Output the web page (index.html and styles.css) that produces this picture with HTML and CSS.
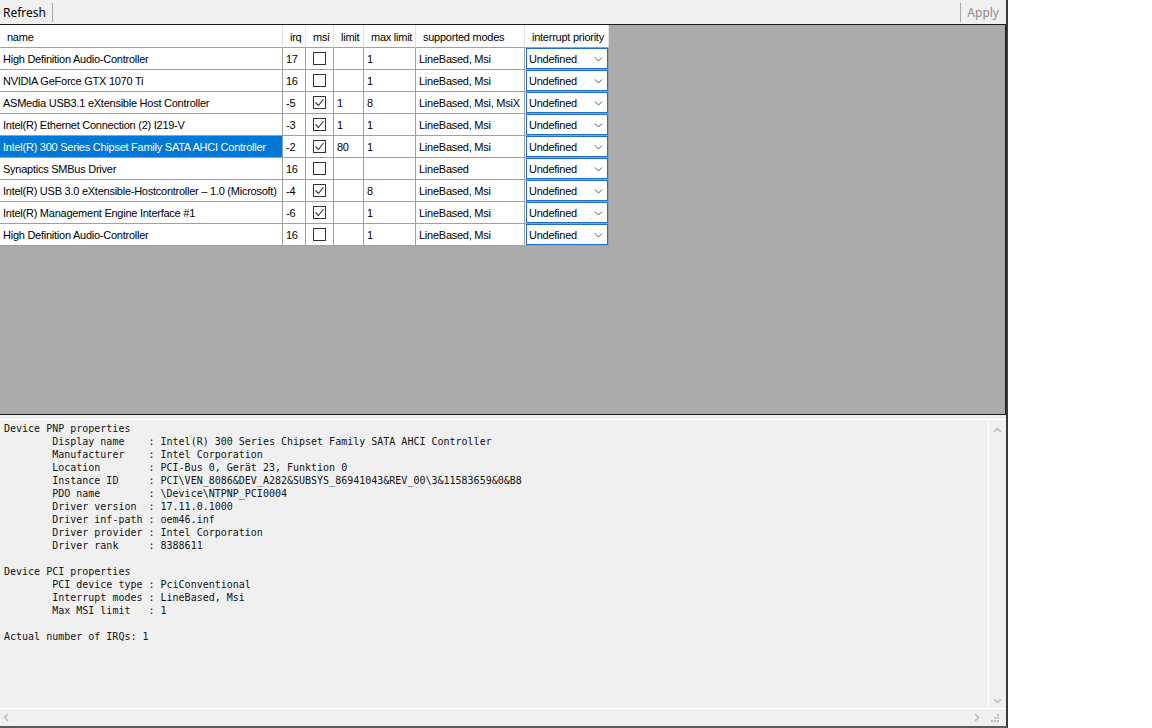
FILE: index.html
```html
<!DOCTYPE html>
<html lang="en">
<head>
<meta charset="utf-8">
<title>MSI mode utility</title>
<link rel="stylesheet" href="styles.css">
</head>
<body>
<div class="window">
  <div class="toolbar">
    <button class="tb-btn">Refresh</button>
    <span class="tb-sep"></span>
    <span class="tb-spacer"></span>
    <span class="tb-sep"></span>
    <button class="tb-btn disabled">Apply</button>
  </div>

  <div class="grid-panel">
    <div class="devgrid">
      <div class="hd">name</div><div class="hd">irq</div><div class="hd">msi</div><div class="hd">limit</div><div class="hd">max limit</div><div class="hd">supported modes</div><div class="hd">interrupt priority</div>

      <div class="cell">High Definition Audio-Controller</div><div class="cell">17</div><div class="cell chk"><span class="box"></span></div><div class="cell"></div><div class="cell">1</div><div class="cell">LineBased, Msi</div><div class="cell pri"><span class="combo">Undefined<svg viewBox="0 0 8 5"><polyline points="0.5,0.5 4,4 7.5,0.5"/></svg></span></div>

      <div class="cell">NVIDIA GeForce GTX 1070 Ti</div><div class="cell">16</div><div class="cell chk"><span class="box"></span></div><div class="cell"></div><div class="cell">1</div><div class="cell">LineBased, Msi</div><div class="cell pri"><span class="combo">Undefined<svg viewBox="0 0 8 5"><polyline points="0.5,0.5 4,4 7.5,0.5"/></svg></span></div>

      <div class="cell">ASMedia USB3.1 eXtensible Host Controller</div><div class="cell">-5</div><div class="cell chk"><span class="box"><svg viewBox="0 0 11 11"><polyline points="1.5,5.5 4.5,8.5 9.5,2"/></svg></span></div><div class="cell">1</div><div class="cell">8</div><div class="cell">LineBased, Msi, MsiX</div><div class="cell pri"><span class="combo">Undefined<svg viewBox="0 0 8 5"><polyline points="0.5,0.5 4,4 7.5,0.5"/></svg></span></div>

      <div class="cell">Intel(R) Ethernet Connection (2) I219-V</div><div class="cell">-3</div><div class="cell chk"><span class="box"><svg viewBox="0 0 11 11"><polyline points="1.5,5.5 4.5,8.5 9.5,2"/></svg></span></div><div class="cell">1</div><div class="cell">1</div><div class="cell">LineBased, Msi</div><div class="cell pri"><span class="combo">Undefined<svg viewBox="0 0 8 5"><polyline points="0.5,0.5 4,4 7.5,0.5"/></svg></span></div>

      <div class="cell selected">Intel(R) 300 Series Chipset Family SATA AHCI Controller</div><div class="cell">-2</div><div class="cell chk"><span class="box"><svg viewBox="0 0 11 11"><polyline points="1.5,5.5 4.5,8.5 9.5,2"/></svg></span></div><div class="cell">80</div><div class="cell">1</div><div class="cell">LineBased, Msi</div><div class="cell pri"><span class="combo">Undefined<svg viewBox="0 0 8 5"><polyline points="0.5,0.5 4,4 7.5,0.5"/></svg></span></div>

      <div class="cell">Synaptics SMBus Driver</div><div class="cell">16</div><div class="cell chk"><span class="box"></span></div><div class="cell"></div><div class="cell"></div><div class="cell">LineBased</div><div class="cell pri"><span class="combo">Undefined<svg viewBox="0 0 8 5"><polyline points="0.5,0.5 4,4 7.5,0.5"/></svg></span></div>

      <div class="cell">Intel(R) USB 3.0 eXtensible-Hostcontroller – 1.0 (Microsoft)</div><div class="cell">-4</div><div class="cell chk"><span class="box"><svg viewBox="0 0 11 11"><polyline points="1.5,5.5 4.5,8.5 9.5,2"/></svg></span></div><div class="cell"></div><div class="cell">8</div><div class="cell">LineBased, Msi</div><div class="cell pri"><span class="combo">Undefined<svg viewBox="0 0 8 5"><polyline points="0.5,0.5 4,4 7.5,0.5"/></svg></span></div>

      <div class="cell">Intel(R) Management Engine Interface #1</div><div class="cell">-6</div><div class="cell chk"><span class="box"><svg viewBox="0 0 11 11"><polyline points="1.5,5.5 4.5,8.5 9.5,2"/></svg></span></div><div class="cell"></div><div class="cell">1</div><div class="cell">LineBased, Msi</div><div class="cell pri"><span class="combo">Undefined<svg viewBox="0 0 8 5"><polyline points="0.5,0.5 4,4 7.5,0.5"/></svg></span></div>

      <div class="cell">High Definition Audio-Controller</div><div class="cell">16</div><div class="cell chk"><span class="box"></span></div><div class="cell"></div><div class="cell">1</div><div class="cell">LineBased, Msi</div><div class="cell pri"><span class="combo">Undefined<svg viewBox="0 0 8 5"><polyline points="0.5,0.5 4,4 7.5,0.5"/></svg></span></div>
    </div>
  </div>

  <div class="splitter"></div>

  <div class="details">
    <div class="details-main">
<pre class="details-text">Device PNP properties
	Display name    : Intel(R) 300 Series Chipset Family SATA AHCI Controller
	Manufacturer    : Intel Corporation
	Location        : PCI-Bus 0, Gerät 23, Funktion 0
	Instance ID     : PCI\VEN_8086&amp;DEV_A282&amp;SUBSYS_86941043&amp;REV_00\3&amp;11583659&amp;0&amp;B8
	PDO name        : \Device\NTPNP_PCI0004
	Driver version  : 17.11.0.1000
	Driver inf-path : oem46.inf
	Driver provider : Intel Corporation
	Driver rank     : 8388611

Device PCI properties
	PCI device type : PciConventional
	Interrupt modes : LineBased, Msi
	Max MSI limit   : 1

Actual number of IRQs: 1</pre>
      <div class="vscroll">
        <svg class="arrow" viewBox="0 0 9 6"><polyline points="1,5 4.5,1.5 8,5"/></svg>
        <svg class="arrow" viewBox="0 0 9 6"><polyline points="1,1 4.5,4.5 8,1"/></svg>
      </div>
    </div>
    <div class="hscroll">
      <svg class="arrow h" viewBox="0 0 6 9"><polyline points="5,1 1.5,4.5 5,8"/></svg>
      <svg class="arrow h" viewBox="0 0 6 9"><polyline points="1,1 4.5,4.5 1,8"/></svg>
      <span class="grip">
        <i></i><i></i><i></i><i></i><i></i><i></i>
      </span>
    </div>
  </div>
</div>
</body>
</html>
```

FILE: styles.css
```css
html, body {
  margin: 0;
  padding: 0;
  background: #ffffff;
}

.window {
  width: 1006px;
  height: 726px;
  background: #f0f0f0;
  border-right: 2px solid #3a3a3a;
  border-bottom: 2px solid #5a5a5a;
  display: flex;
  flex-direction: column;
  font-family: "Liberation Sans", Arial, sans-serif;
  font-size: 11px;
  color: #000;
  overflow: hidden;
}

/* ---- toolbar ---- */
.toolbar {
  height: 24px;
  flex: none;
  display: flex;
  align-items: center;
}

.tb-btn {
  font-family: "Noto Sans", "Liberation Sans", sans-serif;
  font-size: 12px;
  background: transparent;
  border: 0;
  padding: 0 4px 0 3px;
  margin: 0;
  height: 22px;
  color: #000;
}

.tb-btn.disabled {
  color: #8d8d8d;
  padding: 0 7px 0 6px;
}

.tb-sep {
  width: 1px;
  height: 19px;
  background: #a8a8a8;
  margin-left: 2px;
}

.tb-spacer {
  flex: 1;
}

/* ---- device grid ---- */
.grid-panel {
  height: 389px;
  flex: none;
  background: #ababab;
  border-top: 1px solid #1a1a1a;
  border-right: 1px solid #1a1a1a;
  border-bottom: 1px solid #1a1a1a;
}

.devgrid {
  display: grid;
  grid-template-columns: 283px 23px 28px 30px 52px 109px 84px;
  grid-template-rows: 23px;
  grid-auto-rows: 22px;
  width: 609px;
  letter-spacing: -0.25px;
}

.hd {
  background: #fff;
  border-right: 1px solid #e3e3e3;
  border-bottom: 1px solid #a0a0a0;
  padding: 2px 0 0 7px;
  line-height: 20px;
  white-space: nowrap;
  overflow: hidden;
  color: #000;
}

.cell {
  background: #fff;
  border-right: 1px solid #a0a0a0;
  border-bottom: 1px solid #a0a0a0;
  padding: 1px 0 0 3px;
  line-height: 20px;
  white-space: nowrap;
  overflow: hidden;
}

.cell.selected {
  background: #0078d7;
  color: #fff;
}

.cell.chk {
  display: flex;
  align-items: center;
  justify-content: center;
  padding: 0;
}

.box {
  width: 11px;
  height: 11px;
  border: 1px solid #333;
  background: #fff;
  display: flex;
}

.box svg {
  width: 11px;
  height: 11px;
  fill: none;
  stroke: #333;
  stroke-width: 1.1;
}

.cell.pri {
  padding: 0;
}

.combo {
  display: flex;
  align-items: center;
  justify-content: space-between;
  box-sizing: border-box;
  height: 21px;
  border: 1px solid #1f6fc5;
  padding: 1px 3px 0 2px;
  background: #fff;
  margin-left: 1px;
}

.combo svg {
  width: 9px;
  height: 5px;
  fill: none;
  stroke: #555;
  stroke-width: 1;
  margin-right: 1px;
}

/* ---- splitter ---- */
.splitter {
  height: 4px;
  flex: none;
}

/* ---- details text box ---- */
.details {
  flex: 1;
  display: flex;
  flex-direction: column;
  border-top: 1px solid #fff;
  min-height: 0;
}

.details-main {
  flex: 1;
  display: flex;
  min-height: 0;
}

.details-text {
  flex: 1;
  margin: 0;
  padding: 2px 0 0 4px;
  font-family: "DejaVu Sans Mono", "Liberation Mono", monospace;
  font-size: 10px;
  line-height: 13px;
  tab-size: 8;
  color: #111;
  border-right: 1px solid #fff;
  overflow: hidden;
}

.vscroll {
  width: 17px;
  flex: none;
  display: flex;
  flex-direction: column;
  justify-content: space-between;
  align-items: center;
  padding: 7px 0 4px;
}

.arrow {
  width: 9px;
  height: 6px;
  fill: none;
  stroke: #bdbdbd;
  stroke-width: 1.6;
}

.hscroll {
  height: 17px;
  flex: none;
  display: flex;
  align-items: center;
  border-top: 1px solid #fff;
  padding-left: 3px;
}

.arrow.h {
  width: 6px;
  height: 9px;
}

.arrow.h:nth-child(2) {
  margin-left: auto;
  margin-right: 11px;
}

.grip {
  width: 10px;
  height: 10px;
  display: grid;
  grid-template-columns: repeat(3, 3px);
  grid-template-rows: repeat(3, 3px);
  align-self: flex-end;
  margin: 0 5px 2px 0;
}

.grip i {
  width: 2px;
  height: 2px;
  background: #bcbcbc;
}

.grip i:nth-child(1) { grid-column: 3; grid-row: 1; }
.grip i:nth-child(2) { grid-column: 2; grid-row: 2; }
.grip i:nth-child(3) { grid-column: 3; grid-row: 2; }
.grip i:nth-child(4) { grid-column: 1; grid-row: 3; }
.grip i:nth-child(5) { grid-column: 2; grid-row: 3; }
.grip i:nth-child(6) { grid-column: 3; grid-row: 3; }
```
